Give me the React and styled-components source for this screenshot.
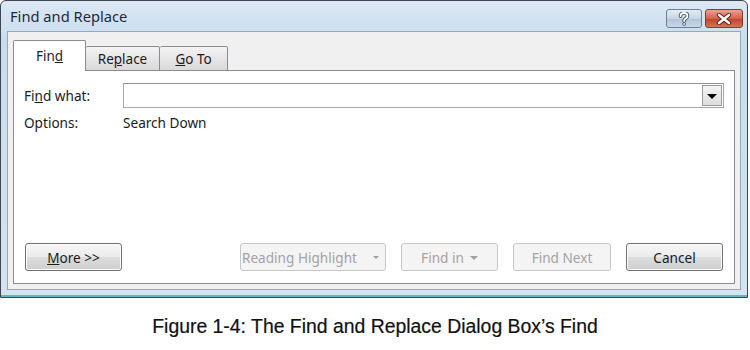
import styled, { createGlobalStyle } from "styled-components";

const GlobalStyle = createGlobalStyle`
  html, body {
    margin: 0;
    padding: 0;
    background: #fff;
  }
  body {
    font-family: "Noto Sans", "DejaVu Sans", sans-serif;
    width: 750px;
    height: 350px;
    overflow: hidden;
  }
`;

const Page = styled.div`
  width: 750px;
  display: flex;
  flex-direction: column;
`;

const Window = styled.div`
  width: 748px;
  height: 298px;
  box-sizing: border-box;
  border: 1px solid #40464f;
  border-radius: 6px 6px 0 0;
  background: linear-gradient(#dce8f4, #cadcec 40px, #d4e3f1);
  box-shadow: inset 0 -2px 0 #5fb5c8;
  padding: 0 6px 7px 6px;
  display: flex;
  flex-direction: column;
`;

const TitleBar = styled.div`
  height: 30px;
  display: flex;
  align-items: center;
  padding-left: 3px;
  margin-right: -2px;
`;

const Title = styled.span`
  flex: 1;
  font-size: 14.7px;
  color: #1e2a3a;
`;

const CaptionButton = styled.div`
  width: ${(p) => p.$w}px;
  height: 19px;
  box-sizing: border-box;
  border: 1px solid ${(p) => (p.$close ? "#8a3a2a" : "#6d7f95")};
  border-radius: 3px;
  margin-left: ${(p) => p.$gap || 0}px;
  margin-top: 5px;
  background: ${(p) =>
    p.$close
      ? "linear-gradient(#e8a493, #d4614b 50%, #c0402a 51%, #d3735c)"
      : "linear-gradient(#e4ecf4, #c6d6e6 50%, #b0c4d8 51%, #c8d8e8)"};
  display: flex;
  align-items: center;
  justify-content: center;
`;

const Panel = styled.div`
  height: 214px;
  box-sizing: border-box;
  border: 1px solid #898c95;
  background: #fff;
  padding: 12px 10px 12px 10px;
  display: flex;
  flex-direction: column;
`;

const Client = styled.div`
  flex: 1;
  background: #f0f0f0;
  border: 1px solid #97a8bb;
  padding: 8px 5px 5px 5px;
  display: flex;
  flex-direction: column;
`;

const TabRow = styled.div`
  display: flex;
  align-items: flex-end;
  height: 31px;
  position: relative;
  z-index: 1;
  margin-bottom: -1px;
`;

const Tab = styled.div`
  width: ${(p) => p.$w}px;
  height: ${(p) => (p.$active ? 31 : 25)}px;
  box-sizing: border-box;
  border: 1px solid #898c95;
  border-bottom: ${(p) => (p.$active ? "none" : "1px solid #898c95")};
  border-left: ${(p) => (p.$first || p.$active ? "1px solid #898c95" : "none")};
  border-radius: 2px 2px 0 0;
  background: ${(p) => (p.$active ? "#fff" : "linear-gradient(#f3f3f3, #e6e6e6 50%, #d9d9d9)")};
  display: flex;
  align-items: center;
  justify-content: center;
  padding-top: ${(p) => (p.$active ? 0 : 1)}px;
  font-size: 13.5px;
  color: #1b1b1b;
`;

const FieldRow = styled.div`
  display: flex;
  align-items: center;
  height: ${(p) => p.$h}px;
  margin-top: ${(p) => p.$mt || 0}px;
`;

const Label = styled.span`
  width: 99px;
  font-size: 13.6px;
  color: #1b1b1b;
`;

const Value = styled.span`
  font-size: 13.6px;
  color: #1b1b1b;
`;

const Combo = styled.div`
  flex: 1;
  height: 25px;
  box-sizing: border-box;
  border: 1px solid #a4a7ab;
  border-top-color: #8e9196;
  background: #fff;
  display: flex;
  justify-content: flex-end;
  align-items: center;
  padding-right: 1px;
`;

const ComboArrow = styled.div`
  width: 20px;
  height: 21px;
  box-sizing: border-box;
  border: 1px solid #9a9a9a;
  background: linear-gradient(#f4f4f4, #dedede);
  display: flex;
  align-items: center;
  justify-content: center;
`;

const Spacer = styled.div`
  flex: 1;
`;

const ButtonRow = styled.div`
  display: flex;
  align-items: center;
  padding-left: 1px;
`;

const Button = styled.div`
  width: ${(p) => p.$w}px;
  height: 28px;
  box-sizing: border-box;
  margin-left: ${(p) => p.$ml || 0}px;
  border: 1px solid ${(p) => (p.$disabled ? "#c6c6c6" : "#707070")};
  border-radius: 3px;
  background: ${(p) =>
    p.$disabled ? "#f4f4f4" : "linear-gradient(#f6f6f6, #ebebeb 50%, #dddddd 51%, #cfcfcf)"};
  box-shadow: ${(p) => (p.$disabled ? "none" : "inset 0 0 0 1px #fcfcfc")};
  display: flex;
  align-items: center;
  justify-content: ${(p) => (p.$split ? "space-between" : "center")};
  padding: ${(p) => (p.$split ? "0 6px 0 1px" : "0")};
  font-size: 13.6px;
  color: ${(p) => (p.$disabled ? "#a3a3a3" : "#1b1b1b")};
  gap: 6px;
`;

const Arrow = styled.span`
  width: 0;
  height: 0;
  border-left: ${(p) => p.$s}px solid transparent;
  border-right: ${(p) => p.$s}px solid transparent;
  border-top: ${(p) => p.$s}px solid ${(p) => p.$c};
  margin-top: 1px;
`;

const Caption = styled.div`
  height: 52px;
  padding-top: 2px;
  display: flex;
  align-items: center;
  justify-content: center;
  font-family: "Liberation Sans", Arial, sans-serif;
  font-size: 19.4px;
  color: #111;
  -webkit-text-stroke: 0.2px #111;
`;

function HelpGlyph() {
  return (
    <svg width="12" height="14" viewBox="0 0 12 14">
      <path
        d="M2.5 4.2 C2.5 1.8 4 1 6 1 C8.2 1 9.5 2.2 9.5 3.9 C9.5 5.6 8.2 6.2 7 7 C6.3 7.5 6.1 8 6.1 9"
        fill="none"
        stroke="#3d4f66"
        strokeWidth="3.6"
        strokeLinecap="round"
      />
      <path
        d="M2.5 4.2 C2.5 1.8 4 1 6 1 C8.2 1 9.5 2.2 9.5 3.9 C9.5 5.6 8.2 6.2 7 7 C6.3 7.5 6.1 8 6.1 9"
        fill="none"
        stroke="#fff"
        strokeWidth="1.8"
        strokeLinecap="round"
      />
      <circle cx="6.1" cy="12" r="1.8" fill="#3d4f66" />
      <circle cx="6.1" cy="12" r="0.9" fill="#fff" />
    </svg>
  );
}

function CloseGlyph() {
  return (
    <svg width="16" height="12" viewBox="0 0 16 12">
      <path d="M3 2 L13 10 M13 2 L3 10" stroke="#5a1a10" strokeWidth="4.4" strokeLinecap="round" />
      <path d="M3 2 L13 10 M13 2 L3 10" stroke="#fff" strokeWidth="2.6" strokeLinecap="round" />
    </svg>
  );
}

export default function App() {
  return (
    <>
      <GlobalStyle />
      <Page>
        <Window>
          <TitleBar>
            <Title>Find and Replace</Title>
            <CaptionButton $w={36}>
              <HelpGlyph />
            </CaptionButton>
            <CaptionButton $w={38} $gap={3} $close>
              <CloseGlyph />
            </CaptionButton>
          </TitleBar>
          <Client>
            <TabRow>
              <Tab $w={73} $active $first>
                <span>
                  Fin<u>d</u>
                </span>
              </Tab>
              <Tab $w={74}>
                <span>
                  Re<u>p</u>lace
                </span>
              </Tab>
              <Tab $w={68}>
                <span>
                  <u>G</u>o To
                </span>
              </Tab>
            </TabRow>
            <Panel>
              <FieldRow $h={25}>
                <Label>
                  Fi<u>n</u>d what:
                </Label>
                <Combo>
                  <ComboArrow>
                    <Arrow $s={5} $c="#000" />
                  </ComboArrow>
                </Combo>
              </FieldRow>
              <FieldRow $h={16} $mt={6}>
                <Label>Options:</Label>
                <Value>Search Down</Value>
              </FieldRow>
              <Spacer />
              <ButtonRow>
                <Button $w={97}>
                  <span>
                    <u>M</u>ore &gt;&gt;
                  </span>
                </Button>
                <Button $w={146} $ml={118} $disabled $split>
                  <span>Reading Highlight</span>
                  <Arrow $s={3} $c="#a0a0a0" />
                </Button>
                <Button $w={97} $ml={15} $disabled>
                  <span>Find in</span>
                  <Arrow $s={4} $c="#a0a0a0" />
                </Button>
                <Button $w={98} $ml={15} $disabled>
                  Find Next
                </Button>
                <Button $w={97} $ml={15}>
                  Cancel
                </Button>
              </ButtonRow>
            </Panel>
          </Client>
        </Window>
        <Caption>Figure 1-4: The Find and Replace Dialog Box’s Find</Caption>
      </Page>
    </>
  );
}
